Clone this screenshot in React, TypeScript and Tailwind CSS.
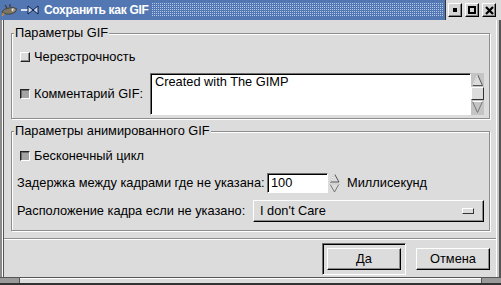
import React from "react";

function Check({ on }: { on?: boolean }) {
  if (on) {
    return (
      <span className="block h-[10px] w-[10px] shrink-0 border border-t-[#222] border-l-[#222] border-b-white border-r-white bg-[#a4a4a4] shadow-[inset_1px_1px_0_#6a6a6a]" />
    );
  }
  return (
    <span className="block h-[10px] w-[10px] shrink-0 border border-t-white border-l-white border-b-[#222] border-r-[#222] bg-[#dcdcdc] shadow-[inset_-1px_-1px_0_#8a8a8a]" />
  );
}

function Wilber() {
  return (
    <svg width="18" height="14" viewBox="0 0 18 14">
      <path d="M1 9 Q3 5 8 5 Q12 3 16 6 Q15 10 10 11 Q5 12 1 9 Z" fill="#7d7462" stroke="#3d3a33" strokeWidth="0.8" />
      <path d="M6 5 L4 2 M9 4 L9 1" stroke="#3d3a33" strokeWidth="1.2" />
      <circle cx="12" cy="7" r="1.4" fill="#fff" />
      <circle cx="12.3" cy="7" r="0.6" fill="#000" />
      <path d="M3 10 L1 13" stroke="#c48a2a" strokeWidth="1.4" />
    </svg>
  );
}

function Pin() {
  return (
    <svg width="18" height="14" viewBox="0 0 18 14">
      <path d="M0 7 H7" stroke="#fff" strokeWidth="1.6" />
      <path d="M7 3 V11 M7 3 L12 7 L7 11 M17 3 V11 M17 3 L12 7 L17 11" stroke="#0b1f4a" strokeWidth="1" fill="#c8d4ea" />
    </svg>
  );
}

function WinBtn({ kind }: { kind: "min" | "max" | "close" }) {
  return (
    <div className="flex h-[14px] w-[14px] items-center justify-center border border-t-white border-l-white border-b-[#000] border-r-[#000] bg-[#d4d4d4] shadow-[inset_-1px_-1px_0_#808080]">
      {kind === "min" && <span className="block h-[4px] w-[4px] bg-black" />}
      {kind === "max" && <span className="block h-[8px] w-[8px] border-2 border-black" />}
      {kind === "close" && (
        <svg width="9" height="9" viewBox="0 0 9 9">
          <path d="M1 1 L8 8 M8 1 L1 8" stroke="#000" strokeWidth="2.2" />
        </svg>
      )}
    </div>
  );
}

function Scrollbar() {
  return (
    <div className="flex w-[13px] shrink-0 flex-col bg-[#c4c4c4]">
      <svg width="13" height="14" viewBox="0 0 13 14">
        <path d="M1.5 12.5 L6.5 1.5 L11.5 12.5 Z" fill="#dcdcdc" stroke="#555" strokeWidth="1" />
        <path d="M1.5 12.5 L6.5 1.5" stroke="#fff" strokeWidth="1" />
      </svg>
      <div className="h-[13px] border border-t-white border-l-white border-b-[#333] border-r-[#333] bg-[#dcdcdc]" />
      <svg width="13" height="14" viewBox="0 0 13 14">
        <path d="M1.5 1.5 L6.5 12.5 L11.5 1.5 Z" fill="#c4c4c4" stroke="#777" strokeWidth="1" />
        <path d="M1.5 1.5 L11.5 1.5" stroke="#fff" strokeWidth="1" />
      </svg>
    </div>
  );
}

function Spinner() {
  return (
    <svg width="11" height="20" viewBox="0 0 11 20">
      <path d="M1 9 L5.5 1 L10 9 Z" fill="#dcdcdc" stroke="#555" strokeWidth="1" />
      <path d="M1 9 L5.5 1" stroke="#fff" strokeWidth="1" />
      <path d="M1 11 L5.5 19 L10 11 Z" fill="#dcdcdc" stroke="#777" strokeWidth="1" />
      <path d="M1 11 L10 11" stroke="#fff" strokeWidth="1" />
    </svg>
  );
}

const raised =
  "border border-t-white border-l-white border-b-black border-r-black shadow-[inset_-1px_-1px_0_#8c8c8c]";
const sunken =
  "border border-t-[#6e6e6e] border-l-[#6e6e6e] border-b-white border-r-white shadow-[inset_1px_1px_0_#000]";
const frame =
  "border border-[#8e8e8e] shadow-[inset_1px_1px_0_#fff,1px_1px_0_#fff]";

export default function App() {
  return (
    <div className="flex h-[285px] w-[501px] flex-col bg-[#dcdcdc] font-['Liberation_Sans',Arial,sans-serif] text-[12.8px] text-black">
      {/* title bar */}
      <div className="flex h-[20px] shrink-0 items-stretch bg-[#5377b3]">
        <div className="flex items-center gap-[2px] pl-[1px]">
          <Wilber />
          <Pin />
        </div>
        <span className="flex items-center pl-[5px] pr-[3px] text-[12px] font-bold tracking-[-0.3px] text-white">Сохранить как GIF</span>
        <div className="my-[3px] flex-1 [background-image:linear-gradient(90deg,transparent_1px,#5377b3_1px),linear-gradient(#b4c8e8_1px,#5377b3_1px)] [background-size:2px_2px]" />
        <div className="ml-[2px] flex items-center gap-[3px] border-l border-l-[#333] bg-[#dcdcdc] pl-[2px] pr-[5px]">
          <WinBtn kind="min" />
          <WinBtn kind="max" />
          <WinBtn kind="close" />
        </div>
      </div>

      {/* window frame + body */}
      <div className="flex flex-1">
        <div className="w-[4px] shrink-0 border-l-2 border-r border-l-[#8a8a8a] border-r-[#555] bg-white" />
        <div className="flex flex-1 flex-col">
          <div className="flex flex-col gap-[5px] pl-[7px] pr-[6px] pt-[6px]">
            <fieldset className={`h-[93px] ${frame}`}>
              <legend className="ml-[2px] bg-[#dcdcdc] px-[1px] leading-[14px]">Параметры GIF</legend>
              <div className="mt-[5px] flex h-[24px] items-center gap-[4px] pl-[8px]">
                <Check />
                <span>Черезстрочность</span>
              </div>
              <div className="mt-[4px] flex items-center pl-[8px]">
                <div className="flex w-[130px] shrink-0 items-center gap-[4px]">
                  <Check on />
                  <span>Комментарий GIF:</span>
                </div>
                <div className="flex h-[42px]">
                  <div className={`w-[321px] shrink-0 bg-white px-[4px] leading-[16px] ${sunken}`}>Created with The GIMP</div>
                  <Scrollbar />
                </div>
              </div>
            </fieldset>

            <fieldset className={`h-[107px] ${frame}`}>
              <legend className="ml-[2px] bg-[#dcdcdc] px-[1px] leading-[14px]">Параметры анимированного GIF</legend>
              <div className="mt-[6px] flex h-[24px] items-center gap-[4px] pl-[8px]">
                <Check on />
                <span>Бесконечный цикл</span>
              </div>
              <div className="mt-[5px] flex h-[20px] items-center pl-[5px]">
                <span className="w-[250px] shrink-0 whitespace-nowrap">Задержка между кадрами где не указана:</span>
                <div className={`flex h-[20px] w-[61px] shrink-0 items-center bg-white px-[3px] ${sunken}`}>100</div>
                <div className="ml-[1px] shrink-0">
                  <Spinner />
                </div>
                <span className="ml-[7px] whitespace-nowrap">Миллисекунд</span>
              </div>
              <div className="mt-[7px] flex items-center pl-[5px]">
                <span className="w-[236px] shrink-0 whitespace-nowrap">Расположение кадра если не указано:</span>
                <div className={`flex h-[22px] w-[231px] shrink-0 items-center justify-between bg-[#dcdcdc] pl-[6px] pr-[9px] ${raised}`}>
                  <span>I don't Care</span>
                  <span className="block h-[6px] w-[12px] border border-t-white border-l-white border-b-[#333] border-r-[#333]" />
                </div>
              </div>
            </fieldset>
          </div>

          <div className="mt-[7px] h-[2px] border-t border-b border-t-[#8e8e8e] border-b-white" />

          <div className="flex flex-1 justify-end gap-[10px] pr-[6px] pt-[3px]">
            <div className="h-[32px] w-[84px] border border-t-[#6e6e6e] border-l-[#6e6e6e] border-b-white border-r-white p-[4px] shadow-[inset_1px_1px_0_#000]">
              <div className={`flex h-[22px] items-center justify-center ${raised}`}>Да</div>
            </div>
            <div className={`mt-[5px] flex h-[22px] w-[74px] items-center justify-center ${raised}`}>Отмена</div>
          </div>
        </div>
        <div className="w-[5px] shrink-0 border-l border-r-2 border-l-white border-r-[#555] bg-[#c8c8c8]" />
      </div>

      {/* bottom frame */}
      <div className="flex h-[8px] shrink-0 border-t border-b-2 border-t-[#555] border-b-[#333]">
        <div className="w-[20px] border-r border-r-[#555] bg-[#9a9a9a]" />
        <div className="flex-1 border-t border-t-white bg-[#dcdcdc]" />
        <div className="w-[20px] border-l border-l-[#555] bg-[#9a9a9a]" />
      </div>
    </div>
  );
}
